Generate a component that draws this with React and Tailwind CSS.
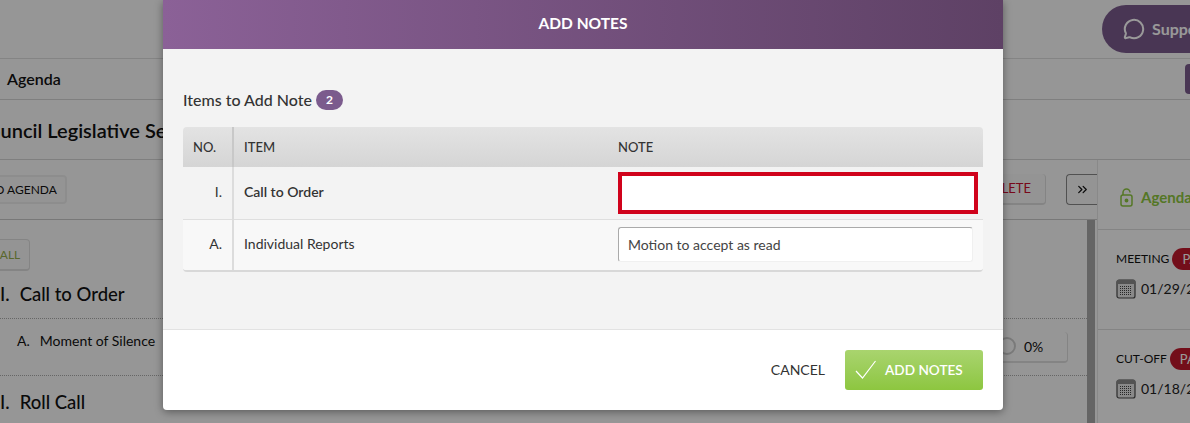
import { ChevronsRight, MessageCircle } from "lucide-react";

// calendario pequeno da barra lateral
function Calendar() {
  return (
    <svg width="20" height="20" viewBox="0 0 20 20" fill="none" className="shrink-0">
      <rect x="1" y="1" width="18" height="18" rx="2" fill="#e4e4e4" stroke="#4a4a4a" strokeWidth="1.2" />
      <rect x="1" y="1" width="18" height="4" fill="#8a8a8a" />
      <path d="M4 7.5h12M4 9.5h12M4 11.5h12M4 13.5h12M4 15.5h12" stroke="#444" strokeWidth="1" strokeDasharray="1 1" />
    </svg>
  );
}

function OpenLock() {
  return (
    <svg width="13" height="19" viewBox="0 0 13 19" fill="none" stroke="#8dc63f" strokeWidth="1.5" className="shrink-0">
      <path d="M3 7V4.5a3.5 3.5 0 0 1 7 0" />
      <rect x="1" y="7" width="11" height="11" rx="2" />
      <circle cx="6.5" cy="12.5" r="1.2" fill="#8dc63f" />
    </svg>
  );
}

function SideItem({ label, date }) {
  return (
    <div className="h-[100px] border-b border-[#dcdcdc] pl-[18px] pt-[18px] whitespace-nowrap">
      <div className="flex items-center gap-[3px]">
        <span className="text-[12px] text-[#111]">{label}</span>
        <span className="h-[22px] rounded-l-full bg-[#c0182c] pl-[10px] pr-4 text-[13px] leading-[22px] text-white">PAST</span>
      </div>
      <div className="mt-[8px] flex items-center gap-[5px]">
        <Calendar />
        <span className="text-[14px] text-[#222]">{date}</span>
      </div>
    </div>
  );
}

// pagina por tras do modal
function Page() {
  return (
    <div className="flex h-[423px] flex-col bg-[#fbfbfb] text-[#111]">
      <header className="flex h-[59px] shrink-0 justify-end border-b border-[#dcdcdc] pt-[5px]">
        <div className="flex h-[48px] w-[88px] items-center gap-[7px] overflow-hidden whitespace-nowrap rounded-l-full bg-[#7b5b8d] pl-[21px] text-[16px] font-bold text-white">
          <MessageCircle size={22} strokeWidth={2.2} className="shrink-0" />
          Support
        </div>
      </header>
      <div className="flex h-[41px] shrink-0 items-center justify-between border-b border-[#d4d4d4] pl-[7px]">
        <span className="text-[16px] font-semibold">Agenda</span>
        <span className="h-[30px] w-[5px] rounded-l bg-[#7b5b8d]" />
      </div>
      <div className="flex h-[60px] shrink-0 items-center border-b border-[#d4d4d4]">
        <h1 className="-ml-[24px] whitespace-nowrap text-[20px] font-semibold">Council Legislative Session</h1>
      </div>
      <div className="flex min-h-0 flex-1">
        <div className="flex min-w-0 flex-1 flex-col">
          <div className="flex h-[60px] shrink-0 items-center justify-between border-b border-[#c8c8c8]">
            <button className="-ml-[53px] h-[29px] whitespace-nowrap rounded border-2 border-[#ececec] bg-[#f7f7f7] pl-[10px] pr-[8px] text-[12px]">
              ADD TO AGENDA
            </button>
            <div className="flex items-center gap-[20px]">
              <button className="h-[31px] w-[90px] rounded border-b-2 border-r border-[#dcdcdc] bg-[#f7f7f7] pr-[14px] text-right text-[13px] text-[#c8102e]">
                DELETE
              </button>
              <button className="flex h-[31px] w-[31px] items-center justify-center rounded-l border border-r-0 border-[#888] bg-[#f7f7f7]">
                <ChevronsRight size={15} strokeWidth={2} />
              </button>
            </div>
          </div>
          <div className="flex min-h-0 flex-1">
            <div className="min-w-0 flex-1 overflow-hidden">
              <button className="-ml-[30px] mt-[19px] block h-[32px] w-[60px] rounded border border-b-2 border-[#dcdcdc] bg-[#f7f7f7] pl-[20px] text-[12px] text-[#94ad4c]">
                ALL
              </button>
              <div className="mt-[11px] flex h-[37px] items-center gap-[10px] border-b border-dotted border-[#aaa] pb-[11px] text-[18.5px] font-medium">
                <span>I.</span>
                <span>Call to Order</span>
              </div>
              <div className="flex h-[57px] items-center justify-between border-b border-dotted border-[#aaa] pl-[17px] pr-[19px]">
                <div className="flex gap-[10px] pb-[14px] text-[14px]">
                  <span>A.</span>
                  <span>Moment of Silence</span>
                </div>
                <div className="flex h-[31px] w-[79px] items-center gap-[8px] rounded border-b-2 border-r border-[#dcdcdc] pl-[9px] text-[14px]">
                  <span className="h-[18px] w-[18px] rounded-full border-2 border-[#ccc]" />
                  0%
                </div>
              </div>
              <div className="mt-[13px] flex items-center gap-[10px] text-[18.5px] font-medium">
                <span>I.</span>
                <span>Roll Call</span>
              </div>
            </div>
            <div className="mr-[2px] w-[8px] shrink-0 bg-[#a8a8a8]" />
          </div>
        </div>
        <aside className="w-[93px] shrink-0 overflow-hidden border-l border-[#e4e4e4] bg-[#fcfcfc]">
          <div className="flex h-[70px] items-center gap-[8px] border-b border-[#dcdcdc] pl-[22px] pt-[5px] whitespace-nowrap">
            <OpenLock />
            <span className="text-[15px] font-bold text-[#8dc63f]">Agenda Status</span>
          </div>
          <SideItem label="MEETING" date="01/29/2019" />
          <SideItem label="CUT-OFF" date="01/18/2019" />
        </aside>
      </div>
    </div>
  );
}

export default function App() {
  return (
    <div className="relative h-[423px] w-full overflow-hidden font-['Lato',sans-serif]">
      <Page />
      <div className="absolute inset-0 bg-black/40" />

      <div className="absolute left-[163px] top-0 w-[840px] overflow-hidden rounded-b shadow-[0_2px_8px_rgba(0,0,0,0.4)]">
        <div className="flex h-[49px] items-center justify-center bg-gradient-to-r from-[#8b6197] to-[#5e4165] pb-[1px] text-[15.5px] font-bold text-white">
          ADD NOTES
        </div>

        <div className="h-[280px] bg-[#f3f3f3] px-[20px] pt-[41px]">
          <div className="flex h-[20px] items-center gap-[4px]">
            <span className="text-[16px] font-medium text-[#333]">Items to Add Note</span>
            <span className="h-[20px] w-[27px] rounded-full bg-[#7b5b8d] text-center text-[12px] font-bold leading-[20px] text-white">2</span>
          </div>

          <div className="mt-[17px] w-[800px] overflow-hidden rounded border-b-2 border-[#d8d8d8]">
            <table className="w-full table-fixed border-collapse text-[14px] text-[#333]">
              <colgroup>
                <col className="w-[50px]" />
                <col className="w-[375px]" />
                <col className="w-[375px]" />
              </colgroup>
              <thead>
                <tr className="h-[40px] bg-gradient-to-b from-[#e3e3e3] to-[#d5d5d5] text-left text-[13px]">
                  <th className="border-r-2 border-[#c8c8c8] pl-[10px] pt-[1px] font-medium">NO.</th>
                  <th className="pl-[10px] pt-[1px] font-medium">ITEM</th>
                  <th className="pl-[10px] pt-[1px] font-medium">NOTE</th>
                </tr>
              </thead>
              <tbody>
                <tr className="h-[52px] border-b border-[#dedede] bg-[#f3f3f3]">
                  <td className="border-r-2 border-[#dcdcdc] pb-[3px] pr-[10px] text-right">I.</td>
                  <td className="pb-[3px] pl-[10px] font-semibold">Call to Order</td>
                  <td className="pl-[10px] pr-[5px] pt-[1px]">
                    <input className="block h-[42px] w-[360px] border-4 border-[#d0021b] bg-white" />
                  </td>
                </tr>
                <tr className="h-[51px] bg-[#f8f8f8]">
                  <td className="border-r-2 border-[#dcdcdc] pb-[2px] pr-[10px] text-right">A.</td>
                  <td className="pb-[2px] pl-[10px]">Individual Reports</td>
                  <td className="pl-[10px]">
                    <input
                      defaultValue="Motion to accept as read"
                      className="block h-[35px] w-[355px] rounded-[3px] border border-[#f0f0f0] border-l-[#aaa] border-t-[#aaa] bg-white pl-[9px] text-[14px] text-[#444]"
                    />
                  </td>
                </tr>
              </tbody>
            </table>
          </div>
        </div>

        <div className="flex h-[81px] items-center justify-end gap-[20px] border-t border-[#e2e2e2] bg-white pr-[20px]">
          <button className="pb-[1px] text-[14px] text-[#333]">CANCEL</button>
          <button className="flex h-[40px] w-[138px] items-center rounded-[3px] bg-gradient-to-b from-[#a9d46e] to-[#8dc63f] pl-[10px] text-[13.6px] font-semibold text-white">
            <svg width="22" height="20" viewBox="0 0 22 20" fill="none" stroke="white" strokeWidth="1.2" className="mr-[8px]">
              <path d="M1 11l6.5 7L20.5 1" />
            </svg>
            ADD NOTES
          </button>
        </div>
      </div>
    </div>
  );
}
